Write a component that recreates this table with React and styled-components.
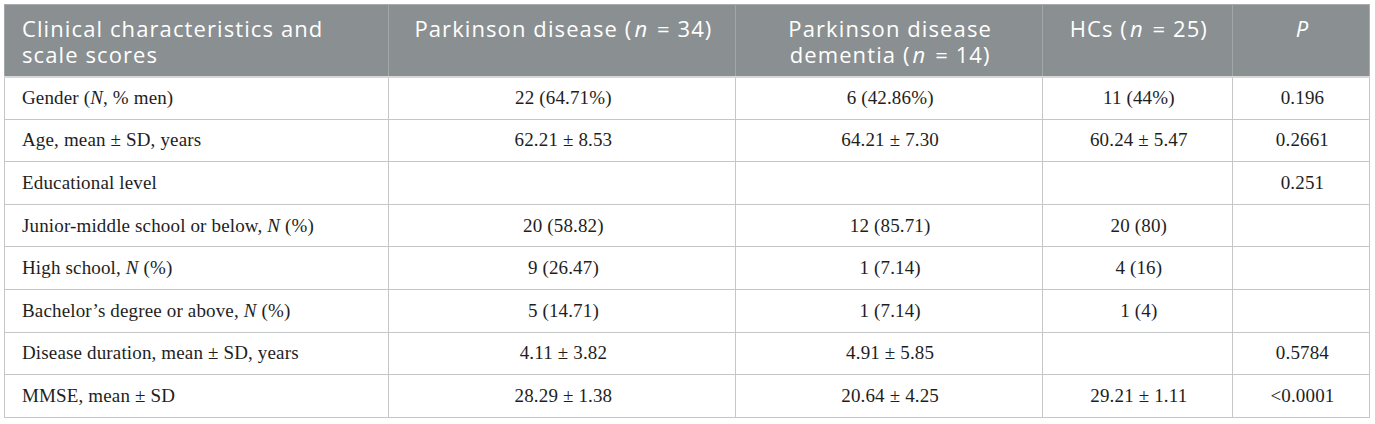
import React from 'react'
import styled, { createGlobalStyle } from 'styled-components'

const GlobalStyle = createGlobalStyle`
  body {
    margin: 0;
    background: #ffffff;
  }
`

const rows = [
  { label: <>Gender (<i>N</i>, % men)</>, pd: '22 (64.71%)', pdd: '6 (42.86%)', hc: '11 (44%)', p: '0.196' },
  { label: <>Age, mean ± SD, years</>, pd: '62.21 ± 8.53', pdd: '64.21 ± 7.30', hc: '60.24 ± 5.47', p: '0.2661' },
  { label: <>Educational level</>, pd: '', pdd: '', hc: '', p: '0.251' },
  { label: <>Junior-middle school or below, <i>N</i> (%)</>, pd: '20 (58.82)', pdd: '12 (85.71)', hc: '20 (80)', p: '' },
  { label: <>High school, <i>N</i> (%)</>, pd: '9 (26.47)', pdd: '1 (7.14)', hc: '4 (16)', p: '' },
  { label: <>Bachelor’s degree or above, <i>N</i> (%)</>, pd: '5 (14.71)', pdd: '1 (7.14)', hc: '1 (4)', p: '' },
  { label: <>Disease duration, mean ± SD, years</>, pd: '4.11 ± 3.82', pdd: '4.91 ± 5.85', hc: '', p: '0.5784' },
  { label: <>MMSE, mean ± SD</>, pd: '28.29 ± 1.38', pdd: '20.64 ± 4.25', hc: '29.21 ± 1.11', p: '<0.0001' },
]

const App = () => {
  return (
    <Wrap>
      <GlobalStyle />
      <Table>
        <colgroup>
          <col style={{ width: 384 }} />
          <col style={{ width: 346 }} />
          <col style={{ width: 307 }} />
          <col style={{ width: 190 }} />
          <col style={{ width: 137 }} />
        </colgroup>
        <thead>
          <tr>
            <Th align="left">Clinical characteristics and scale scores</Th>
            <Th>Parkinson disease (<Var>n</Var> = 34)</Th>
            <Th>Parkinson disease dementia (<Var>n</Var> = 14)</Th>
            <Th>HCs (<Var>n</Var> = 25)</Th>
            <Th><Var>P</Var></Th>
          </tr>
        </thead>
        <tbody>
          {rows.map((r, i) => (
            <tr key={i}>
              <Td align="left">{r.label}</Td>
              <Td>{r.pd}</Td>
              <Td>{r.pdd}</Td>
              <Td>{r.hc}</Td>
              <Td>{r.p}</Td>
            </tr>
          ))}
        </tbody>
      </Table>
    </Wrap>
  )
}

const Wrap = styled.div`
  padding: 4px 0 0 4px;
`

const Table = styled.table`
  width: 1366px;
  table-layout: fixed;
  border-collapse: collapse;
  border: 1px solid #a9adae;
`

const Th = styled.th`
  height: 72px;
  box-sizing: border-box;
  padding: 10px 14px 6px 17px;
  vertical-align: top;
  text-align: ${props => props.align || 'center'};
  background: #8a8f91;
  color: #ffffff;
  font-family: "Open Sans", "Noto Sans", sans-serif;
  font-weight: 400;
  font-size: 22px;
  letter-spacing: 1.1px;
  line-height: 26px;
  border-left: 1px solid #a3a7a8;
  border-bottom: 2px solid #d6d8d9;
`

const Var = styled.i`
  font-style: italic;
  padding: 0 2px;
`

const Td = styled.td`
  height: 42.6px;
  box-sizing: border-box;
  padding: 0 14px 0 17px;
  vertical-align: middle;
  text-align: ${props => props.align || 'center'};
  color: #1e1e1e;
  font-family: "Liberation Serif", "Times New Roman", serif;
  font-size: 19px;
  letter-spacing: 0.15px;
  border: 1px solid #c4c6c7;
`

export default App
